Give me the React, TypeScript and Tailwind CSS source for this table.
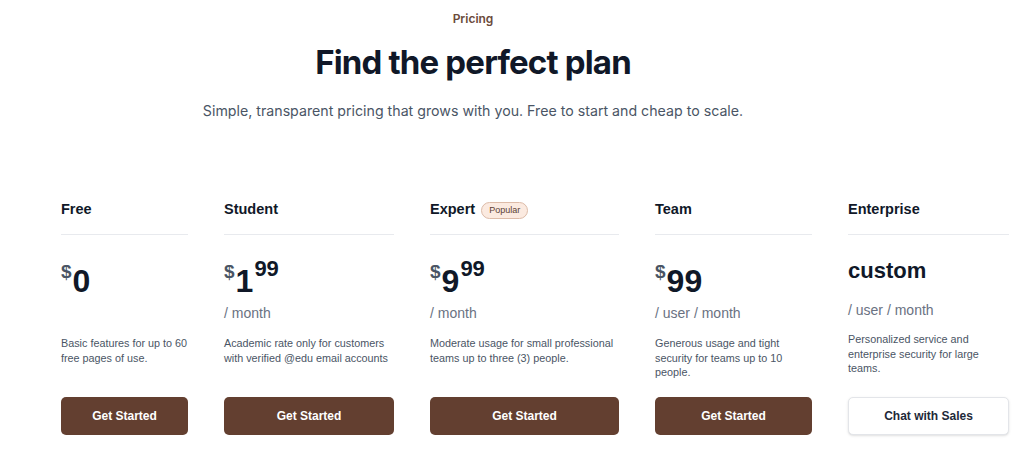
import { ReactNode } from "react";

type Plan = {
  name: string;
  width: string;
  dollars: string;
  cents?: string;
  unit?: string;
  description: string;
  popular?: boolean;
};

const plans: Plan[] = [
  {
    name: "Free",
    width: "w-[127px]",
    dollars: "0",
    description: "Basic features for up to 60 free pages of use.",
  },
  {
    name: "Student",
    width: "w-[170px]",
    dollars: "1",
    cents: "99",
    unit: "/ month",
    description: "Academic rate only for customers with verified @edu email accounts",
  },
  {
    name: "Expert",
    width: "w-[189px]",
    dollars: "9",
    cents: "99",
    unit: "/ month",
    description: "Moderate usage for small professional teams up to three (3) people.",
    popular: true,
  },
  {
    name: "Team",
    width: "w-[157px]",
    dollars: "99",
    unit: "/ user / month",
    description: "Generous usage and tight security for teams up to 10 people.",
  },
];

function Heading({ children }: { children: ReactNode }) {
  return (
    <div className="flex h-[24px] items-center gap-[6px]">
      {children}
    </div>
  );
}

function PlanColumn({ plan }: { plan: Plan }) {
  return (
    <div className={`${plan.width} flex flex-col`}>
      <Heading>
        <span className="text-[14.5px] font-bold text-gray-900">{plan.name}</span>
        {plan.popular && (
          <span className="rounded-full border border-[#dcbba8] bg-[#fbeae0] px-[7px] py-[3px] text-[9px] leading-none text-[#5a4034]">
            Popular
          </span>
        )}
      </Heading>
      <div className="mt-[12px] border-t border-[#e8eaee]" />
      <div className="mt-[30px] flex h-[32px] items-start font-bold text-gray-900">
        <span className="mt-[-3px] mr-[1px] text-[19px] leading-none text-gray-600">$</span>
        <span className="text-[32px] leading-none">{plan.dollars}</span>
        {plan.cents && (
          <span className="mt-[-7px] ml-[1px] text-[22px] leading-none">{plan.cents}</span>
        )}
      </div>
      <div className="mt-[6px] h-[20px] text-[14px] leading-[20px] text-gray-500">
        {plan.unit}
      </div>
      <p className="mt-[13px] h-[61px] text-[10.8px] leading-[14.5px] text-gray-600">
        {plan.description}
      </p>
      <button className="h-[38px] w-full rounded-[5px] bg-[#633f30] text-[12px] font-bold text-white">
        Get Started
      </button>
    </div>
  );
}

export default function App() {
  return (
    <div className="min-h-[456px] bg-white font-['Liberation_Sans',Arial,sans-serif]">
      <div className="flex w-[946px] flex-col items-center pt-[11px] font-['Inter',sans-serif]">
        <p className="text-[12px] font-semibold leading-[16px] text-[#6b4a3a]">Pricing</p>
        <h1 className="mt-[15px] text-[33px] font-bold leading-[40px] tracking-tight text-gray-900">
          Find the perfect plan
        </h1>
        <p className="mt-[19px] text-[14.2px] leading-[20px] text-gray-600">
          Simple, transparent pricing that grows with you. Free to start and cheap to scale.
        </p>
      </div>

      <div className="mt-[77px] flex gap-[36px] pl-[61px]">
        {plans.map((plan) => (
          <PlanColumn key={plan.name} plan={plan} />
        ))}

        <div className="flex w-[161px] flex-col">
          <Heading>
            <span className="text-[14.5px] font-bold text-gray-900">Enterprise</span>
          </Heading>
          <div className="mt-[12px] border-t border-[#e8eaee]" />
          <div className="mt-[23px] h-[26px] text-[22px] font-bold leading-[26px] text-gray-900">
            custom
          </div>
          <div className="mt-[16px] h-[20px] text-[14px] leading-[20px] text-gray-500">
            / user / month
          </div>
          <p className="mt-[12px] h-[65px] text-[10.8px] leading-[14.5px] text-gray-600">
            Personalized service and enterprise security for large teams.
          </p>
          <button className="h-[38px] w-full rounded-[5px] border border-[#e3e5e9] bg-white text-[12px] font-bold text-gray-800 shadow-sm">
            Chat with Sales
          </button>
        </div>
      </div>
    </div>
  );
}
